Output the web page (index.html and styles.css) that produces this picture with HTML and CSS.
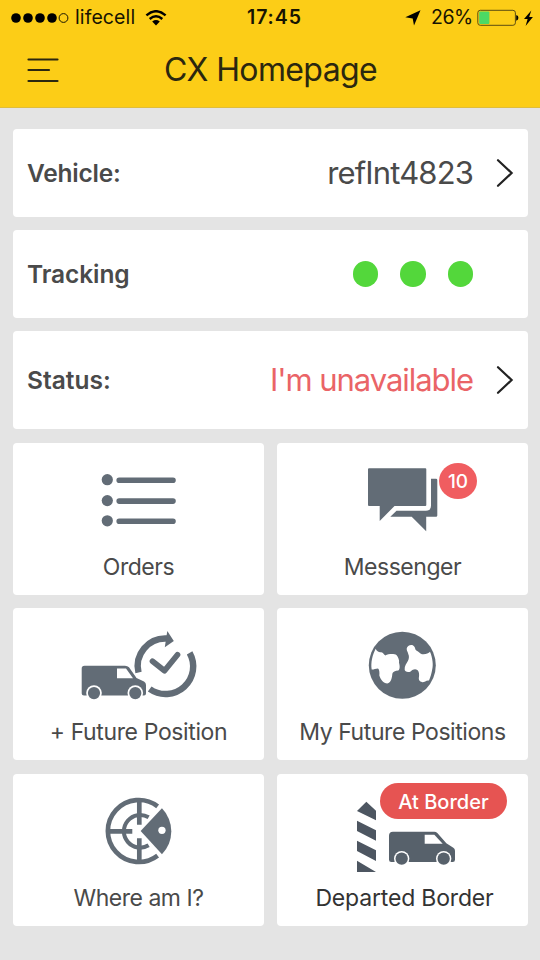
FILE: index.html
```html
<!DOCTYPE html>
<html lang="en">
<head>
<meta charset="utf-8">
<title>CX Homepage</title>
<link rel="stylesheet" href="styles.css">
</head>
<body>
<header class="header">
  <div class="status">
    <svg class="signal" viewBox="0 0 58 12"><circle cx="5" cy="6" r="4.8"/><circle cx="17" cy="6" r="4.8"/><circle cx="29" cy="6" r="4.8"/><circle cx="41" cy="6" r="4.8"/><circle class="empty" cx="52.5" cy="6" r="4.4"/></svg>
    <span class="carrier">lifecell</span>
    <svg class="wifi" viewBox="0 0 22 16"><path class="wave" d="M1.4 5.4Q11-3 20.6 5.4M4.7 9Q11 3.6 17.3 9"/><path d="M7.2 11.4Q11 8.6 14.8 11.4L11 15.4Z"/></svg>
    <span class="time">17:45</span>
    <svg class="locate" viewBox="0 0 16 16"><path d="M15.5.3 9 15.5 7.7 8.6.3 7.2Z"/></svg>
    <span class="percent">26%</span>
    <svg class="battery" viewBox="0 0 58 18"><rect class="case" x=".8" y="1.3" width="37.6" height="15" rx="2.5"/><rect class="level" x="2.2" y="2.6" width="10.2" height="12.4" rx="1"/><path d="M39.2 6.2h.5q1.7.4 1.7 2.6t-1.7 2.6h-.5ZM54.3 1.4 47 10h3.6l-2 7 7.3-9h-3.7Z"/></svg>
  </div>
  <div class="titlebar">
    <svg class="menu" viewBox="0 0 32 26"><path d="M1.5 2.5h29M1.5 13h20.5M1.5 24h29"/></svg>
    <h1 class="title">CX Homepage</h1>
  </div>
</header>
<main class="main">
  <section class="row">
    <span class="name vehicle">Vehicle:</span>
    <span class="value">refInt4823</span>
    <svg class="chevron" viewBox="0 0 18 30"><path d="m2 2.2 13.6 12.8L2 27.8"/></svg>
  </section>
  <section class="row">
    <span class="name tracking">Tracking</span>
    <span class="lights"><i></i><i></i><i></i></span>
  </section>
  <section class="row tall">
    <span class="name state">Status:</span>
    <span class="value alert">I'm unavailable</span>
    <svg class="chevron" viewBox="0 0 18 30"><path d="m2 2.2 13.6 12.8L2 27.8"/></svg>
  </section>
  <section class="tiles">
    <div class="tile">
      <svg class="icon" viewBox="13 443 251 108"><circle cx="107.3" cy="479.7" r="5.6"/><circle cx="107.3" cy="500.6" r="5.6"/><circle cx="107.3" cy="520.8" r="5.6"/><path class="line" stroke-width="5.6" d="M119.2 480.3h53.8M119.2 501.1h53.8M119.2 521.2h53.8"/></svg>
      <span class="label">Orders</span>
    </div>
    <div class="tile">
      <svg class="icon" viewBox="277 443 251 108"><path d="M369 468.3h56.3q1 0 1 1v35.700q0 1-1 1H394.500L379.700 521V506H369q-1 0-1-1v-35.700q0-1 1-1ZM431 478.800h5q1.300 0 1.300 1.300v35.500q0 1.200-1.300 1.200h-9.800V531.300L411.700 516.800H390.300L396.500 510.800H426q5 0 5-5Z"/></svg>
      <span class="label">Messenger</span>
      <span class="badge">10</span>
    </div>
    <div class="tile">
      <svg class="icon" viewBox="13 608.5 251 108"><path d="M84.500 666.300H125q2.500 0 4 1.500L136.500 678.500 144 682q2 1 2 3.500V694q0 2-2 2H84q-2.300 0-2.300-2V669q0-2.700 2.800-2.700Z"/><path class="hole" d="M117 669h9l7 9.800h-16Z"/><circle class="hole" cx="94" cy="693.6" r="7.8"/><circle class="hole" cx="135.3" cy="693.6" r="7.8"/><circle cx="94" cy="693.6" r="6.1"/><circle cx="135.3" cy="693.6" r="6.1"/><path class="arc" stroke-width="6.4" d="M138.500 673A27.600 27.600 0 0 1 167 639M189.600 653.300A27.600 27.600 0 0 1 149.700 689.500"/><path d="m167.300 631.500 6.500 10-9 6.300Z"/><path class="line" stroke-width="5.7" d="m152.500 661.700 12 9.500 13-16"/></svg>
      <span class="label future">+ Future Position</span>
    </div>
    <div class="tile">
      <svg class="icon" viewBox="277 608.5 251 108"><circle cx="402.3" cy="665.8" r="33.5"/><path class="hole" transform="translate(350 620) scale(.33333)" d="M77 88C80 96 87 99 94 98C100 99 102 105 106 108C116 103 132 102 140 107C144 112 149 122 147 130C150 140 150 150 145 153C136 153 128 157 127 163C126 176 123 190 112 192C100 192 92 180 88 168C89 158 88 150 84 147C76 147 70 151 65 150C62 130 67 107 77 88ZM170 88C171 77 186 73 192 80C196 84 195 90 199 93C207 96 209 103 216 104C226 105 235 103 240 97C248 115 250 138 247 148C245 162 241 174 237 183C229 181 225 188 217 188C208 187 205 180 207 172C208 164 207 156 203 152C195 147 189 150 183 155C175 160 164 157 164 150C163 140 170 132 174 124C177 117 178 110 175 104C174 98 170 94 170 88Z"/></svg>
      <span class="label positions">My Future Positions</span>
    </div>
    <div class="tile">
      <svg class="icon" viewBox="13 774 251 108"><g transform="translate(90.3 785) scale(.33333)"><path class="arc" stroke-width="14" d="M202 64A93 93 0 1 0 202 212"/><path class="arc" stroke-width="12" d="M175 97A49 49 0 1 0 175 181"/><path class="arc" stroke-width="14" d="M147 45V119M147 160V232M54 139H126"/><path d="M151 138 215 70A99 99 0 0 1 215 208Z"/><circle class="hole" cx="215" cy="136" r="11"/></g></svg>
      <span class="label where">Where am I?</span>
    </div>
    <div class="tile">
      <svg class="icon dark" viewBox="277 774 251 108"><g transform="translate(340 775) scale(.33333)"><path class="post" d="M79 80 108 107V136L51 108ZM51 137 108 166V197L51 168ZM51 197 108 226V258L51 228ZM51 257 108 291H51Z"/><path d="M159 170H283Q288 170 292 174L319 205 340 218Q345 221 345 227V254Q345 261 338 261H154Q147 261 147 254V182Q147 170 159 170Z"/><path class="hole" d="M254 179H283L308 206H254Z"/><circle class="hole" cx="185" cy="251" r="23"/><circle class="hole" cx="311" cy="251" r="23"/><circle cx="185" cy="251" r="18.5"/><circle cx="311" cy="251" r="18.5"/></g></svg>
      <span class="label departed">Departed Border</span>
      <span class="pill">At Border</span>
    </div>
  </section>
</main>
</body>
</html>
```
FILE: styles.css
```css
* { box-sizing: border-box; }
body {
  margin: 0;
  width: 540px;
  height: 960px;
  overflow: hidden;
  background: #e4e4e4;
  color: #4a4a4a;
  font-family: Inter, "Liberation Sans", sans-serif;
}
svg { display: block; flex: none; }
.header {
  height: 108px;
  background: #fccd17;
  border-bottom: 1px solid #dfbd3c;
}
.status {
  display: flex;
  align-items: center;
  height: 35px;
  padding-left: 11px;
  color: #171402;
  font-size: 19.5px;
  line-height: 35px;
  white-space: nowrap;
}
.signal { width: 58px; height: 12px; }
.signal .empty { fill: none; stroke: #171402; stroke-width: 1; }
.carrier { width: 61px; margin-left: 6px; letter-spacing: 0.1px; }
.wifi { width: 22px; height: 16px; margin-left: 9px; }
.wave { fill: none; stroke: #000; stroke-width: 2.4; }
.time { width: 58px; margin-left: 80px; font-weight: 600; letter-spacing: 0.9px; }
.locate { width: 16px; height: 16px; margin-left: 100px; }
.percent { width: 43px; margin-left: 10px; letter-spacing: -0.5px; }
.battery { width: 58px; height: 18px; margin-left: 3px; }
.case { fill: none; stroke: #5c4d12; stroke-width: 1; }
.level { fill: #4cd964; }
.titlebar {
  display: flex;
  align-items: center;
  height: 70px;
  padding-left: 27px;
}
.menu { width: 32px; height: 26px; }
.menu path { fill: none; stroke: #2b270f; stroke-width: 2.2; stroke-linecap: round; }
.title {
  margin: 0 0 0 105px;
  color: #2b270f;
  font-size: 32px;
  font-weight: 400;
  line-height: 40px;
  letter-spacing: -0.62px;
  white-space: nowrap;
}
.main {
  display: flex;
  flex-direction: column;
  gap: 13.4px;
  padding: 20.6px 12px 0 13px;
}
.row {
  display: flex;
  align-items: center;
  height: 88px;
  padding: 0 14px;
  background: #fff;
  border-radius: 4px;
}
.row.tall { height: 98px; }
.name { flex: 1; font-size: 24.5px; font-weight: 600; }
.vehicle { letter-spacing: -0.22px; }
.tracking { letter-spacing: -0.1px; }
.value {
  font-size: 31px;
  font-weight: 400;
  line-height: 36px;
  letter-spacing: -0.85px;
  white-space: nowrap;
}
.alert { color: #ea6467; letter-spacing: -1.05px; }
.chevron { width: 18px; height: 30px; margin-left: 23px; }
.chevron path { fill: none; stroke: #222; stroke-width: 2.2; stroke-linecap: round; }
.lights { display: flex; gap: 22px; margin-right: 41px; }
.lights i { width: 25.5px; height: 25.5px; border-radius: 50%; background: #53d73b; }
.tiles { display: grid; grid-template-columns: 1fr 1fr; gap: 13.6px 13px; }
.tile {
  position: relative;
  display: flex;
  flex-direction: column;
  align-items: center;
  height: 152px;
  background: #fff;
  border-radius: 4px;
}
.icon { width: 251px; height: 108px; fill: #626c76; }
.icon .hole { fill: #fff; }
.icon .line { fill: none; stroke: #626c76; stroke-linecap: round; stroke-linejoin: round; }
.icon .arc { fill: none; stroke: #626c76; }
.icon.dark { fill: #57616b; }
.icon .post { fill: #4d5661; }
.label {
  font-size: 23px;
  line-height: 32px;
  letter-spacing: -0.48px;
  white-space: nowrap;
}
.future { letter-spacing: -0.38px; }
.positions { letter-spacing: -0.43px; }
.where { letter-spacing: -0.5px; }
.departed { padding-left: 4px; color: #333; letter-spacing: -0.18px; }
.badge, .pill {
  position: absolute;
  display: flex;
  align-items: center;
  justify-content: center;
  color: #fff;
  white-space: nowrap;
}
.badge {
  left: 162px;
  top: 20px;
  width: 38px;
  height: 36px;
  padding-top: 1px;
  border-radius: 50%;
  background: #f05d60;
  font-size: 19px;
  font-weight: 500;
}
.pill {
  left: 103px;
  top: 9px;
  width: 127px;
  height: 36px;
  padding-top: 2px;
  border-radius: 18px;
  background: #e65452;
  font-size: 20px;
  font-weight: 500;
}
```
